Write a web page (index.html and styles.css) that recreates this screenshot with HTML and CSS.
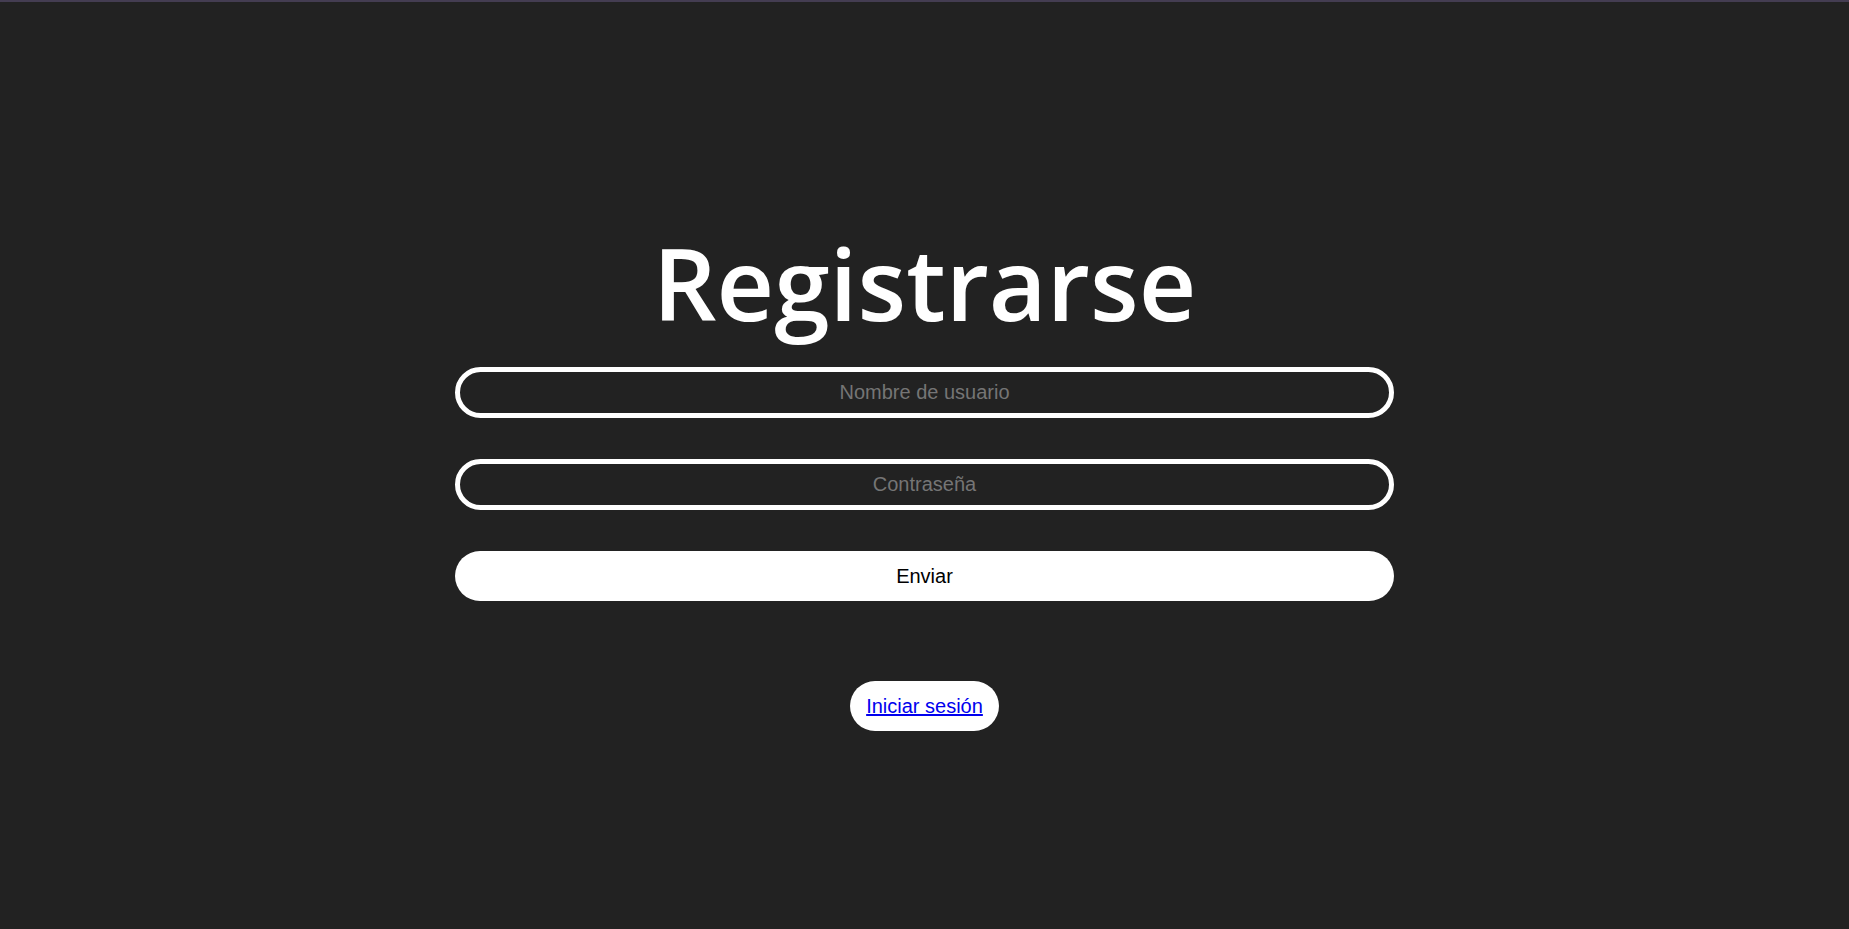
FILE: index.html
```html
<!DOCTYPE html>
<html lang="es">
<head>
<meta charset="utf-8">
<title>Registrarse</title>
<link rel="stylesheet" href="styles.css">
</head>
<body>
<main class="page">
  <h1 class="title">Registrarse</h1>
  <form class="form">
    <input class="field" type="text" placeholder="Nombre de usuario">
    <input class="field" type="password" placeholder="Contraseña">
    <button class="submit" type="button">Enviar</button>
  </form>
  <div class="alt">
    <a class="alt-link" href="#">Iniciar sesión</a>
  </div>
</main>
</body>
</html>
```

FILE: styles.css
```css
html, body {
  margin: 0;
  padding: 0;
  height: 100%;
}
body {
  background: #222222;
  border-top: 2px solid #443d52;
  box-sizing: border-box;
  font-family: "Liberation Sans", Arial, sans-serif;
}
.page {
  display: flex;
  flex-direction: column;
  align-items: center;
  padding-top: 230px;
}
.title {
  margin: 0 0 35px 0;
  font-family: "Open Sans", "Noto Sans", sans-serif;
  font-weight: 600;
  font-size: 100px;
  line-height: 1;
  color: #ffffff;
}
.form {
  display: flex;
  flex-direction: column;
  gap: 41px;
  width: 939px;
}
.field {
  box-sizing: border-box;
  height: 51px;
  width: 100%;
  border: 5px solid #ffffff;
  border-radius: 26px;
  background: #222222;
  color: #ffffff;
  font-family: "Liberation Sans", Arial, sans-serif;
  font-size: 20px;
  text-align: center;
  outline: none;
  padding: 0 20px;
}
.field::placeholder {
  color: #757575;
}
.submit {
  box-sizing: border-box;
  height: 50px;
  width: 100%;
  border: none;
  border-radius: 25px;
  background: #ffffff;
  color: #000000;
  font-family: "Liberation Sans", Arial, sans-serif;
  font-size: 20px;
  cursor: pointer;
}
.alt {
  margin-top: 80px;
  display: flex;
  align-items: center;
  height: 50px;
  padding: 0 16px;
  background: #ffffff;
  border-radius: 25px;
}
.alt-link {
  color: #0000ee;
  font-size: 20px;
  text-decoration: underline;
}
```
